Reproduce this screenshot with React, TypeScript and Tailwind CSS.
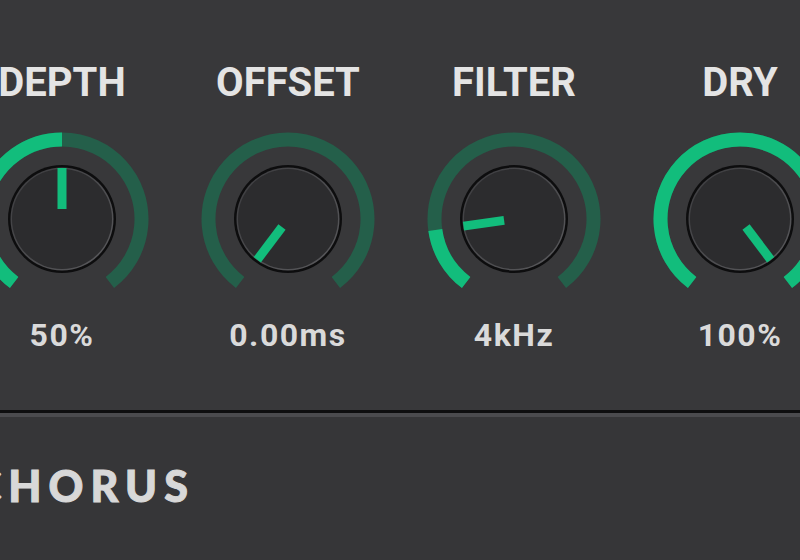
import React from "react";

const KNOBS = [
  { label: "DEPTH", value: "50%", angle: 0 },
  { label: "OFFSET", value: "0.00ms", angle: -143 },
  { label: "FILTER", value: "4kHz", angle: -98 },
  { label: "DRY", value: "100%", angle: 143 },
];

const START = -143;
const END = 143;

function pt(cx: number, cy: number, r: number, a: number) {
  const rad = (a * Math.PI) / 180;
  return [cx + r * Math.sin(rad), cy - r * Math.cos(rad)];
}

function arc(cx: number, cy: number, r: number, a0: number, a1: number) {
  const [x0, y0] = pt(cx, cy, r, a0);
  const [x1, y1] = pt(cx, cy, r, a1);
  const large = a1 - a0 > 180 ? 1 : 0;
  return `M ${x0} ${y0} A ${r} ${r} 0 ${large} 1 ${x1} ${y1}`;
}

function Knob({ angle }: { angle: number }) {
  const c = 90;
  const [ix0, iy0] = pt(c, c, 10, angle);
  const [ix1, iy1] = pt(c, c, 51, angle);
  return (
    <svg width="180" height="180" viewBox="0 0 180 180">
      <defs>
        <linearGradient id="rim" x1="0" y1="0" x2="1" y2="1">
          <stop offset="0" stopColor="#3c3c3f" />
          <stop offset="1" stopColor="#5a5a5d" />
        </linearGradient>
      </defs>
      <path d={arc(c, c, 79.5, START, END)} fill="none" stroke="#245f4a" strokeWidth="14" />
      {angle > START && (
        <path d={arc(c, c, 79.5, START, angle)} fill="none" stroke="#12bd7c" strokeWidth="14" />
      )}
      <circle cx={c} cy={c} r="54" fill="#0d0d0e" />
      <circle cx={c} cy={c} r="51.5" fill="url(#rim)" />
      <circle cx={c} cy={c} r="50" fill="#2c2c2e" />
      <line x1={ix0} y1={iy0} x2={ix1} y2={iy1} stroke="#12bd7c" strokeWidth="9" />
    </svg>
  );
}

export default function App() {
  return (
    <div className="w-[800px] h-[560px] overflow-hidden bg-[#38383a] flex flex-col">
      <div className="h-[410px] flex ml-[-51px]">
        {KNOBS.map((k) => (
          <div key={k.label} className="w-[226px] shrink-0 flex flex-col items-center">
            <div className="mt-[63px] h-[40px] text-[40px] leading-none font-bold text-[#e4e4e4] font-['Roboto',sans-serif]">
              {k.label}
            </div>
            <div className="mt-[26px]">
              <Knob angle={k.angle} />
            </div>
            <div className="mt-[10px] text-[32px] leading-none font-bold tracking-[1.5px] text-[#dadada] font-['Roboto',sans-serif]">
              {k.value}
            </div>
          </div>
        ))}
      </div>
      <div className="h-[3px] bg-[#0e0e0f]" />
      <div className="h-[4px] bg-[#4b4b4e]" />
      <div className="flex-1 bg-[#363638] pt-[47px]">
        <div className="ml-[-27px] text-[43px] leading-none font-black tracking-[7px] text-[#d8d8d8] [-webkit-text-stroke:1px_#d8d8d8] font-['Lato',sans-serif]">
          CHORUS
        </div>
      </div>
    </div>
  );
}
